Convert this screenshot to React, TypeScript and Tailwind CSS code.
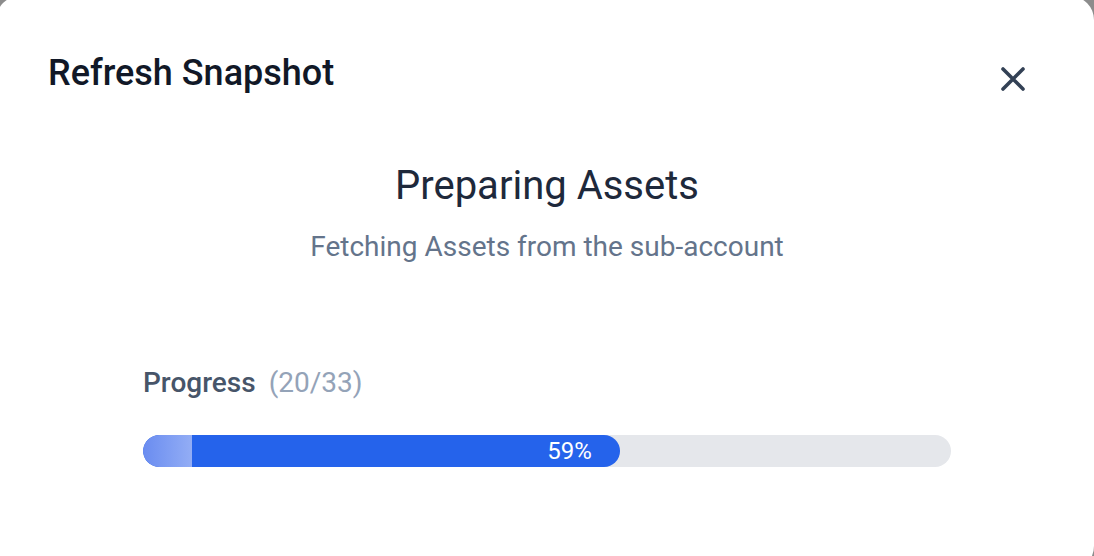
import React from 'react';

const CloseIcon: React.FC = () => (
  <svg width="24" height="24" viewBox="0 0 24 24" fill="none" stroke="currentColor" strokeWidth="3.6" strokeLinecap="round">
    <path d="M2 2L22 22M22 2L2 22" />
  </svg>
);

const App: React.FC = () => {
  const done = 20;
  const total = 33;
  const pct = 59;

  return (
    <div className="h-[556px] w-full overflow-hidden bg-[#8c8c8c]">
      <div className="-ml-1 -mt-1 h-[574px] w-[1098px] rounded-3xl bg-white font-['Roboto',sans-serif]">
        {/* Header */}
        <div className="flex items-start justify-between pl-[52px] pr-[69px] pt-[55px]">
          <h1 className="text-[36px] leading-[44px] font-medium text-[#111827]">Refresh Snapshot</h1>
          <button className="mt-4 text-[#334155]" aria-label="Close">
            <CloseIcon />
          </button>
        </div>

        {/* Body */}
        <div className="flex flex-col items-center pl-1">
          <h2 className="mt-[67px] text-[40px] leading-[48px] font-normal text-[#1e293b]">Preparing Assets</h2>
          <p className="mt-5 text-[28px] leading-[34px] text-[#64748b]">Fetching Assets from the sub-account</p>

          <div className="mt-[102px] w-[808px]">
            <div className="flex items-baseline">
              <span className="text-[28px] leading-[34px] font-medium text-[#475569]">Progress</span>
              <span className="ml-[13px] text-[28px] leading-[34px] text-[#94a3b8]">({done}/{total})</span>
            </div>
            <div className="mt-[35px] h-8 w-full overflow-hidden rounded-full bg-[#e5e7eb]">
              <div
                className="flex h-full items-center justify-between overflow-hidden rounded-full bg-[#2563eb]"
                style={{ width: `${pct}%` }}
              >
                <div className="h-full w-[49px] bg-gradient-to-r from-[#6a8cf0] to-[#93adf5]" />
                <span className="pr-7 text-[24px] leading-none text-white">{pct}%</span>
              </div>
            </div>
          </div>
        </div>
      </div>
    </div>
  );
};

export default App;
